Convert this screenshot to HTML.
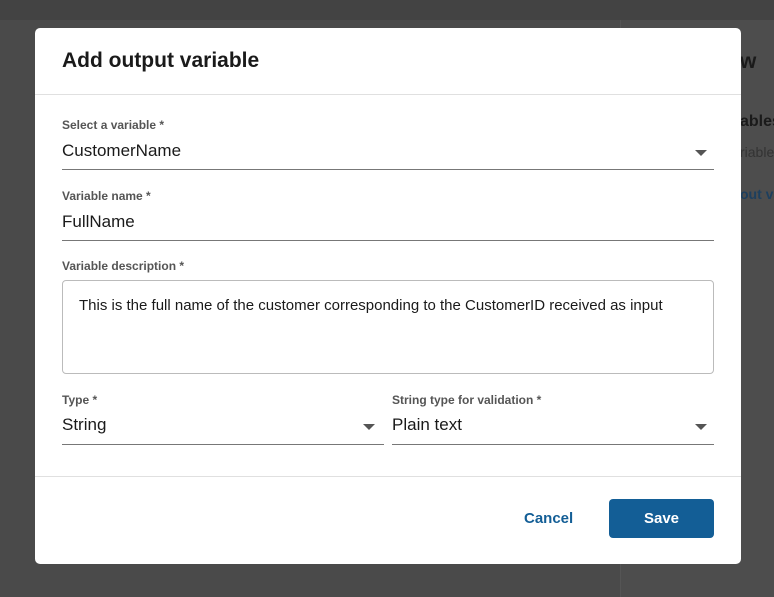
<!DOCTYPE html>
<html><head><style>
body{margin:0;width:774px;height:597px;background:#4a4a4a;font-family:"Liberation Sans",sans-serif;position:relative;overflow:hidden}
.top{position:absolute;left:0;top:0;width:774px;height:20px;background:#434343}
.rp{position:absolute;left:620px;top:20px;width:154px;height:577px;background:#4d4d4d;border-left:1px solid #555}
.bg{position:absolute;color:#1a1a1a;font-weight:bold;white-space:nowrap}
.modal{position:absolute;left:35px;top:28px;width:706px;height:536px;background:#fff;border-radius:5px}
h1{position:absolute;left:27px;top:21px;margin:0;font-size:21px;font-weight:bold;color:#1a1a1a}
.hr{position:absolute;left:0;width:706px;height:1px;background:#e0e0e0}
.lbl{position:absolute;font-size:12px;font-weight:bold;color:#555}
.val{position:absolute;font-size:17px;color:#1a1a1a}
.ul{position:absolute;height:1px;background:#777}
.tri{position:absolute;width:0;height:0;border-left:6px solid transparent;border-right:6px solid transparent;border-top:6px solid #555}
.ta{position:absolute;left:27px;top:252px;width:650px;height:92px;border:1px solid #bbb;border-radius:4px}
.ta span{position:absolute;left:16px;top:16px;font-size:15px;color:#1a1a1a;white-space:nowrap}
.btn{position:absolute;left:574px;top:471px;width:105px;height:39px;background:#135e96;border-radius:4px;color:#fff;font-weight:bold;font-size:15px;text-align:center;line-height:39px}
.cancel{position:absolute;left:489px;top:482px;color:#135e96;font-weight:bold;font-size:15px}
</style></head><body>
<div class="top"></div>
<div class="rp"></div>
<div class="bg" style="left:740px;top:50px;font-size:21px">w</div>
<div class="bg" style="left:740px;top:113px;font-size:16px">ables</div>
<div class="bg" style="left:740px;top:144px;font-size:14px;font-weight:normal;color:#333">riable</div>
<div class="bg" style="left:740px;top:186px;font-size:14px;color:#1d3f5e">out va</div>
<div class="modal">
<h1>Add output variable</h1>
<div class="hr" style="top:66px"></div>
<div class="lbl" style="left:27px;top:90px">Select a variable *</div>
<div class="val" style="left:27px;top:113px">CustomerName</div>
<div class="tri" style="left:660px;top:122px"></div>
<div class="ul" style="left:27px;top:141px;width:652px"></div>
<div class="lbl" style="left:27px;top:161px">Variable name *</div>
<div class="val" style="left:27px;top:184px">FullName</div>
<div class="ul" style="left:27px;top:212px;width:652px"></div>
<div class="lbl" style="left:27px;top:231px">Variable description *</div>
<div class="ta"><span>This is the full name of the customer corresponding to the CustomerID received as input</span></div>
<div class="lbl" style="left:27px;top:365px">Type *</div>
<div class="val" style="left:27px;top:387px">String</div>
<div class="tri" style="left:328px;top:396px"></div>
<div class="ul" style="left:27px;top:416px;width:322px"></div>
<div class="lbl" style="left:357px;top:365px">String type for validation *</div>
<div class="val" style="left:357px;top:387px">Plain text</div>
<div class="tri" style="left:660px;top:396px"></div>
<div class="ul" style="left:357px;top:416px;width:322px"></div>
<div class="hr" style="top:448px"></div>
<div class="cancel">Cancel</div>
<div class="btn">Save</div>
</div>
</body></html>
